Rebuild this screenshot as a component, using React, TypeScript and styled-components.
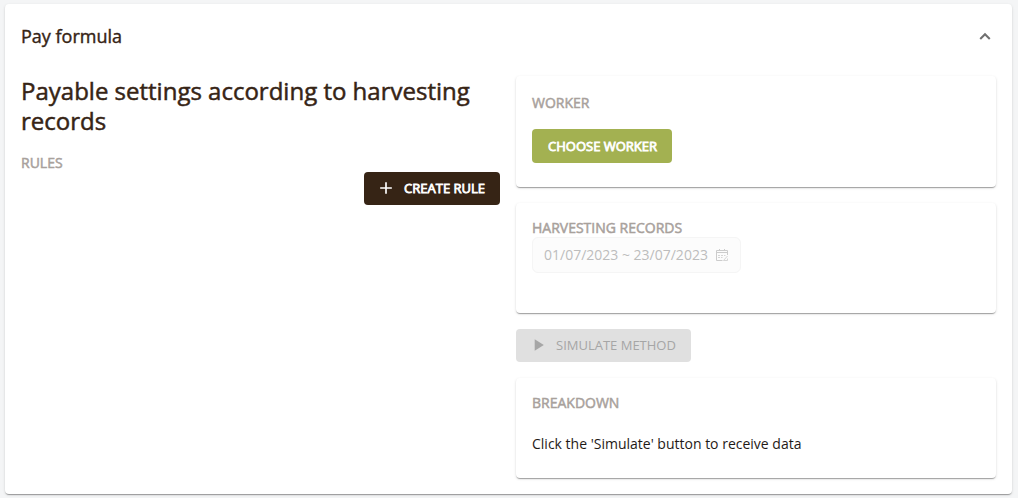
import React from "react";
import styled, { createGlobalStyle } from "styled-components";

const GlobalStyle = createGlobalStyle`
  *, *::before, *::after { box-sizing: border-box; }
  body {
    margin: 0;
    background: #f4f5f6;
    color: #362415;
    font-family: "Open Sans", "Noto Sans", sans-serif;
  }
`;

const Page = styled.main`
  padding: 4px 6px 4px 5px;
`;

const Paper = styled.section`
  background: #fff;
  border-radius: 4px;
  box-shadow: 0 2px 1px -1px rgba(0, 0, 0, 0.2), 0 1px 1px 0 rgba(0, 0, 0, 0.14),
    0 1px 3px 0 rgba(0, 0, 0, 0.12);
`;

const PanelHeader = styled.button`
  display: flex;
  align-items: center;
  justify-content: space-between;
  width: 100%;
  height: 64px;
  padding: 0 16px;
  border: 0;
  background: none;
  color: inherit;
  font: inherit;
  cursor: pointer;
`;

const PanelTitle = styled.span`
  font-size: 18px;
  line-height: 24px;
  -webkit-text-stroke: 0.4px currentColor;
`;

const Columns = styled.div`
  display: grid;
  grid-template-columns: 479fr 480fr;
  gap: 16px;
  padding: 8px 16px 16px;
`;

const LeftColumn = styled.div`
  display: flex;
  flex-direction: column;
`;

const RightColumn = styled.div`
  display: flex;
  flex-direction: column;
  gap: 16px;
`;

const Heading = styled.h2`
  margin: 0 0 18px;
  font-size: 24px;
  font-weight: 400;
  line-height: 30px;
  -webkit-text-stroke: 0.5px currentColor;
`;

const Label = styled.h3`
  margin: 0;
  color: #a8a19c;
  font-size: 14px;
  font-weight: 400;
  line-height: 18px;
  text-transform: uppercase;
  -webkit-text-stroke: 0.5px currentColor;
`;

const Card = styled(Paper)<{ $minHeight: number; $top?: number }>`
  display: flex;
  flex-direction: column;
  align-items: flex-start;
  min-height: ${(p) => p.$minHeight}px;
  padding: ${(p) => p.$top ?? 16}px 16px 16px;
`;

const tones = {
  dark: { background: "#362415", color: "#fff", stroke: "0.8px" },
  green: { background: "#a3b151", color: "#fff", stroke: "0.8px" },
  disabled: { background: "#e0e0e0", color: "#a6a6a6", stroke: "0" },
};

const Button = styled.button<{ $tone: keyof typeof tones }>`
  display: inline-flex;
  align-items: center;
  gap: 8px;
  height: 33px;
  padding: 0 15px 1px 16px;
  border: 0;
  border-radius: 4px;
  background: ${(p) => tones[p.$tone].background};
  color: ${(p) => tones[p.$tone].color};
  font-family: inherit;
  font-size: 13px;
  font-weight: 400;
  line-height: 20px;
  text-transform: uppercase;
  white-space: nowrap;
  -webkit-text-stroke: ${(p) => tones[p.$tone].stroke} currentColor;
  cursor: pointer;

  &:disabled {
    cursor: default;
  }
`;

const CreateButton = styled(Button)`
  align-self: flex-end;
`;

const SimulateButton = styled(Button)`
  align-self: flex-start;
`;

const ChooseButton = styled(Button)`
  height: 34px;
  margin-top: 17px;
`;

const ButtonIcon = styled.svg`
  flex: none;
  width: 20px;
  height: 20px;
  margin-left: -4px;
  fill: currentColor;
`;

const DateRange = styled.button`
  display: inline-flex;
  align-items: center;
  gap: 8px;
  height: 36px;
  padding: 0 12px 0 11px;
  border: 1px solid #f5f5f5;
  border-radius: 6px;
  background: #fcfcfc;
  color: #bdbdbd;
  font-family: inherit;
  font-size: 14px;
  line-height: 20px;
  white-space: nowrap;
`;

const Message = styled.p`
  margin: 22px 0 0;
  color: #1f1a17;
  font-size: 14px;
  line-height: 20px;
`;

export default function App() {
  return (
    <>
      <GlobalStyle />
      <Page>
        <Paper>
          <PanelHeader type="button" aria-expanded="true" aria-controls="pay-formula">
            <PanelTitle>Pay formula</PanelTitle>
            <svg width="22" height="22" viewBox="0 0 24 24" fill="#707070" aria-hidden="true">
              <path d="M12 8.500l-6 6 1.600 1.600L12 11.700l4.400 4.400L18 14.500z" />
            </svg>
          </PanelHeader>
          <Columns id="pay-formula">
            <LeftColumn>
              <Heading>Payable settings according to harvesting records</Heading>
              <Label>Rules</Label>
              <CreateButton type="button" $tone="dark">
                <ButtonIcon viewBox="0 0 24 24" strokeWidth="0" aria-hidden="true">
                  <path d="M19 13h-6v6h-2v-6H5v-2h6V5h2v6h6v2z" />
                </ButtonIcon>
                Create rule
              </CreateButton>
            </LeftColumn>
            <RightColumn>
              <Card $minHeight={111} $top={18}>
                <Label>Worker</Label>
                <ChooseButton type="button" $tone="green">
                  Choose worker
                </ChooseButton>
              </Card>
              <Card $minHeight={110}>
                <Label>Harvesting records</Label>
                <DateRange type="button" disabled>
                  01/07/2023 ~ 23/07/2023
                  <svg width="12" height="12" viewBox="0 0 12 12" fill="none" stroke="#cccccc" aria-hidden="true">
                    <path d="M6.500 11.500h-6v-10h11v4.500M0.500 3.500h11M3.500 0v2M8.500 0v2" />
                    <path d="M2 6.500h2M5 6.500h2M8 6.500h1.500M2 8.500h2M5 8.500h1.500M11.500 7l-4 4.500h4V9.500" strokeWidth="0.8" />
                  </svg>
                </DateRange>
              </Card>
              <SimulateButton type="button" disabled $tone="disabled">
                <ButtonIcon viewBox="0 0 24 24" aria-hidden="true">
                  <path d="M8 5v14l11-7z" />
                </ButtonIcon>
                Simulate method
              </SimulateButton>
              <Card $minHeight={100}>
                <Label>Breakdown</Label>
                <Message>Click the 'Simulate' button to receive data</Message>
              </Card>
            </RightColumn>
          </Columns>
        </Paper>
      </Page>
    </>
  );
}
